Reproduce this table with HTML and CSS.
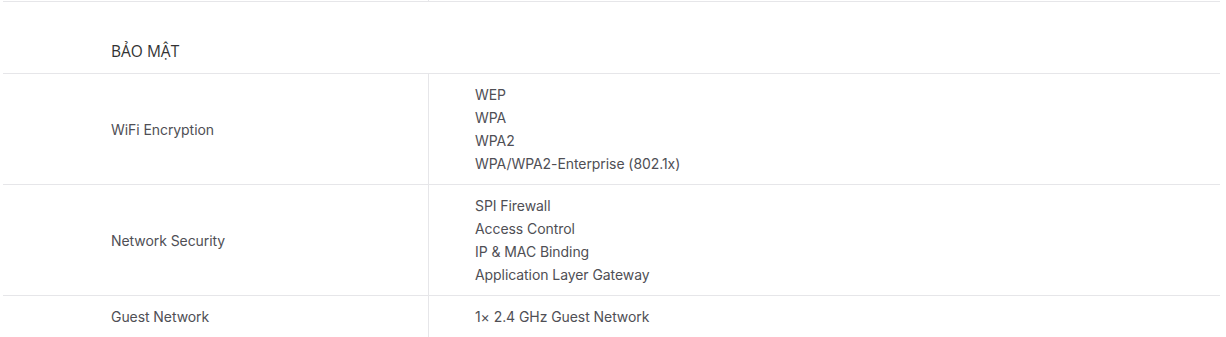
FILE: index.html
```html
<!DOCTYPE html>
<html lang="vi">
<head>
<meta charset="utf-8">
<link rel="stylesheet" href="styles.css">
</head>
<body>
<div class="spec">
  <div class="row row-prev">
    <div class="cell-label"></div>
    <div class="cell-value"></div>
  </div>
  <div class="section-title">BẢO MẬT</div>
  <div class="row">
    <div class="cell-label">WiFi Encryption</div>
    <div class="cell-value">
      <div>WEP</div>
      <div>WPA</div>
      <div>WPA2</div>
      <div>WPA/WPA2-Enterprise (802.1x)</div>
    </div>
  </div>
  <div class="row">
    <div class="cell-label">Network Security</div>
    <div class="cell-value">
      <div>SPI Firewall</div>
      <div>Access Control</div>
      <div>IP &amp; MAC Binding</div>
      <div>Application Layer Gateway</div>
    </div>
  </div>
  <div class="row">
    <div class="cell-label">Guest Network</div>
    <div class="cell-value">
      <div>1× 2.4 GHz Guest Network</div>
    </div>
  </div>
</div>
</body>
</html>
```
FILE: styles.css
```css
html, body {
  margin: 0;
  padding: 0;
  background: #fff;
}
body {
  font-family: Inter, "Noto Sans", sans-serif;
  font-size: 14px;
  letter-spacing: -0.07px;
  color: #4f4f55;
}
.spec {
  margin-left: 3px;
  width: 1217px;
}
.row {
  display: grid;
  grid-template-columns: 426px 1fr;
  border-top: 1px solid #e6e6e9;
}
.row-prev {
  border-top: none;
  height: 1px;
}
.row-prev .cell-label {
  padding: 0;
}
.cell-label {
  border-right: 1px solid #e6e6e9;
  padding-left: 108px;
  display: flex;
  align-items: center;
  line-height: 23px;
}
.cell-value {
  padding: 9px 0 9px 46px;
  line-height: 23px;
}
.row-prev .cell-value {
  padding: 0;
}
.section-title {
  border-top: 1px solid #e6e6e9;
  height: 72px;
  box-sizing: border-box;
  padding: 37px 0 0 108px;
  font-family: "Open Sans", sans-serif;
  font-size: 15.5px;
  letter-spacing: 0;
  line-height: 24px;
  color: #333;
}
```
